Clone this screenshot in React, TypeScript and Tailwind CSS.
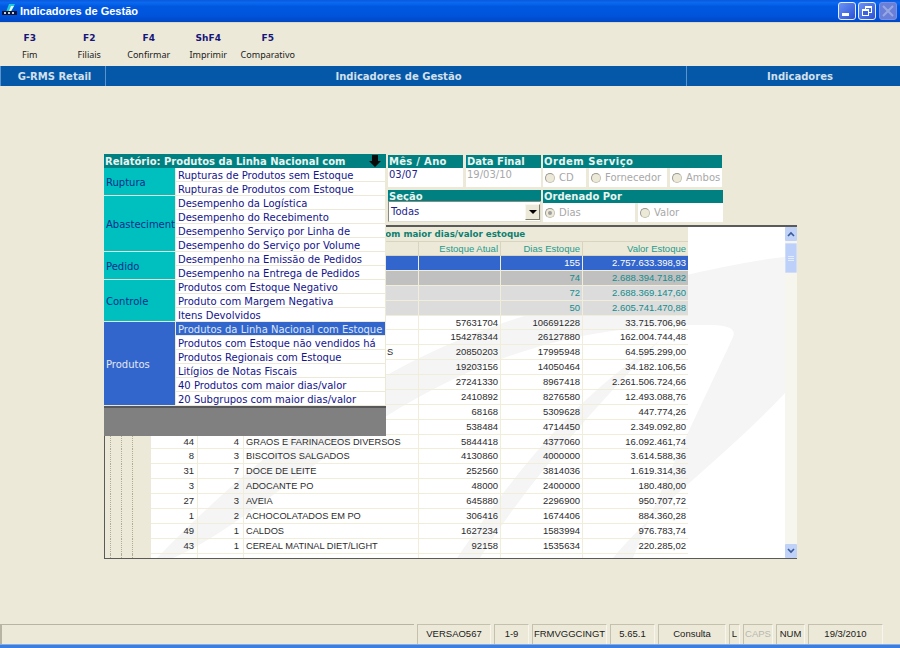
import React from "react";

const tools = [
  ["F3", "Fim"],
  ["F2", "Filiais"],
  ["F4", "Confirmar"],
  ["ShF4", "Imprimir"],
  ["F5", "Comparativo"],
];

const groups: { name: string; bg: string; text: string; items: string[] }[] = [
  { name: "Ruptura", bg: "bg-[#00bfbf]", text: "text-[#00308c]", items: ["Rupturas de Produtos sem Estoque", "Rupturas de Produtos com Estoque"] },
  { name: "Abastecimento", bg: "bg-[#00bfbf]", text: "text-[#00308c]", items: ["Desempenho da Logística", "Desempenho do Recebimento", "Desempenho Serviço por Linha de", "Desempenho do Serviço por Volume"] },
  { name: "Pedido", bg: "bg-[#00bfbf]", text: "text-[#00308c]", items: ["Desempenho na Emissão de Pedidos", "Desempenho na Entrega de Pedidos"] },
  { name: "Controle", bg: "bg-[#00bfbf]", text: "text-[#00308c]", items: ["Produtos com Estoque Negativo", "Produto com Margem Negativa", "Itens Devolvidos"] },
  { name: "Produtos", bg: "bg-[#3366cc]", text: "text-[#e4e8f4]", items: ["Produtos da Linha Nacional com Estoque", "Produtos com Estoque não vendidos há", "Produtos Regionais com Estoque", "Litígios de Notas Fiscais", "40 Produtos com maior dias/valor", "20 Subgrupos com maior dias/valor"] },
];

type Row = [string, string, string, string, string, string];
const rows: Row[] = [
  ["", "", "", "", "155", "2.757.633.398,93"],
  ["", "", "", "", "74", "2.688.394.718,82"],
  ["", "", "", "", "72", "2.688.369.147,60"],
  ["", "", "", "", "50", "2.605.741.470,88"],
  ["", "", "", "57631704", "106691228", "33.715.706,96"],
  ["", "", "", "154278344", "26127880", "162.004.744,48"],
  ["", "", "S", "20850203", "17995948", "64.595.299,00"],
  ["", "", "", "19203156", "14050464", "34.182.106,56"],
  ["", "", "", "27241330", "8967418", "2.261.506.724,66"],
  ["", "", "", "2410892", "8276580", "12.493.088,76"],
  ["", "", "", "68168", "5309628", "447.774,26"],
  ["", "", "", "538484", "4714450", "2.349.092,80"],
  ["44", "4", "GRAOS E FARINACEOS DIVERSOS", "5844418", "4377060", "16.092.461,74"],
  ["8", "3", "BISCOITOS SALGADOS", "4130860", "4000000", "3.614.588,36"],
  ["31", "7", "DOCE DE LEITE", "252560", "3814036", "1.619.314,36"],
  ["3", "2", "ADOCANTE PO", "48000", "2400000", "180.480,00"],
  ["27", "3", "AVEIA", "645880", "2296900", "950.707,72"],
  ["1", "2", "ACHOCOLATADOS EM PO", "306416", "1674406", "884.360,28"],
  ["49", "1", "CALDOS", "1627234", "1583994", "976.783,74"],
  ["43", "1", "CEREAL MATINAL DIET/LIGHT", "92158", "1535634", "220.285,02"],
  ["16", "1", "CONFEITOS ACUCARADOS", "354400", "1322812", "139.566,00"],
];

const rowStyle = (i: number) => {
  if (i === 0) return "bg-[#3366cc] text-white";
  if (i === 1) return "bg-[#c0c0c0] text-[#128c8c]";
  if (i === 2 || i === 3) return "bg-[#dcdcdc] text-[#128c8c]";
  return "text-[#2c2c2c]";
};

const status: [string, string][] = [
  ["VERSAO567", "w-[74px]"],
  ["1-9", "w-[35px]"],
  ["FRMVGGCINGT", "w-[75px]"],
  ["5.65.1", "w-[45px]"],
  ["Consulta", "w-[68px]"],
  ["L", "w-[11px]"],
  ["CAPS", "w-[30px] text-[#b8b8b0]"],
  ["NUM", "w-[29px]"],
  ["19/3/2010", "w-[75px]"],
];

function Radio({ label, checked, className }: { label: string; checked?: boolean; className: string }) {
  return (
    <div className={`bg-white h-full flex items-center pl-[2px] gap-[4px] text-[#a8a8a8] ${className}`}>
      <span className="w-[10px] h-[10px] rounded-full bg-[#ece9d8] border border-[#c4c2b0] border-l-[#9a9a90] border-t-[#9a9a90] flex items-center justify-center shrink-0">
        {checked && <span className="w-[4px] h-[4px] rounded-full bg-[#a0a0a0]" />}
      </span>
      {label}
    </div>
  );
}

function PanelHead({ children, className }: { children: React.ReactNode; className?: string }) {
  return <div className={`h-[13px] bg-[#008080] text-[#e8f4f0] font-bold text-[10px] leading-[13px] pl-[1px] whitespace-nowrap overflow-hidden ${className ?? ""}`}>{children}</div>;
}

function WinBtn({ children, className }: { children: React.ReactNode; className: string }) {
  return (
    <div className={`w-[18px] h-[18px] rounded-[3px] border flex items-center justify-center ${className}`}>
      {children}
    </div>
  );
}

export default function App() {
  return (
    <div className="w-[900px] h-[648px] bg-[#ece9d8] flex flex-col overflow-hidden relative font-['Liberation_Sans',sans-serif]">
      {/* title bar */}
      <div className="h-[23px] shrink-0 flex items-center pl-[2px] pr-[3px] bg-[linear-gradient(180deg,#0a58dc_0%,#0a6af0_12%,#0058e0_30%,#0054dc_70%,#0048c4_100%)] border-b border-[#dcd8c8]">
        <svg width="16" height="16" viewBox="0 0 16 16" className="shrink-0">
          <path d="M7 1 L13 1 L9 9 L4 9 Z" fill="#18c8d8" />
          <path d="M9 3 L12 3 L9 8 L7 8 Z" fill="#e8fcff" />
          <rect x="0" y="8" width="15" height="4" fill="#0a1430" />
          <rect x="2" y="9" width="2" height="2" fill="#d0d0d0" />
          <rect x="6" y="9" width="2" height="2" fill="#d0d0d0" />
          <rect x="10" y="9" width="2" height="2" fill="#d0d0d0" />
        </svg>
        <span className="ml-[2px] mt-[1px] text-white font-bold text-[11px] font-['Liberation_Sans',sans-serif] flex-1">Indicadores de Gestão</span>
        <div className="flex gap-[2px] items-center">
          <WinBtn className="border-[#e4ecfc] bg-[linear-gradient(135deg,#6a94f4,#2a50d8)]">
            <span className="w-[7px] h-[3px] bg-white mt-[7px] mr-[3px]" />
          </WinBtn>
          <WinBtn className="border-[#e4ecfc] bg-[linear-gradient(135deg,#6a94f4,#2a50d8)]">
            <svg width="12" height="12" viewBox="0 0 12 12" fill="none" stroke="white">
              <rect x="4.5" y="1.5" width="6" height="6" strokeWidth="1" />
              <path d="M4.5 2.5 H10.5" strokeWidth="1" />
              <rect x="1.5" y="4.5" width="6" height="6" fill="#3a62e0" strokeWidth="1" />
              <path d="M1.5 5.5 H7.5" strokeWidth="1" />
            </svg>
          </WinBtn>
          <WinBtn className="bg-[#6a80d8] border-[#7a90e4] ml-[1px]">
            <svg width="12" height="12" viewBox="0 0 12 12" stroke="#98a8e4" strokeWidth="2">
              <path d="M1 1 L11 11 M11 1 L1 11" />
            </svg>
          </WinBtn>
        </div>
      </div>

      {/* toolbar */}
      <div className="h-[43px] shrink-0 flex pt-[9px]">
        {tools.map(([k, l]) => (
          <div key={k} className="w-[59.5px] flex flex-col items-center">
            <span className="font-['DejaVu_Sans',sans-serif] font-bold text-[9px] leading-[13px] text-[#16167a]">{k}</span>
            <span className="mt-[4px] text-[9px] leading-[12px] text-[#202020] whitespace-nowrap font-['Noto_Sans',sans-serif]">{l}</span>
          </div>
        ))}
      </div>

      {/* module bar */}
      <div className="h-[20px] shrink-0 bg-[#0558a8] flex text-[#d4e0ec] font-['DejaVu_Sans',sans-serif] font-bold text-[10px] leading-[22px] text-center">
        <div className="w-[106px] border-x border-[#5a94cc] pl-[3px]">G-RMS Retail</div>
        <div className="w-[581px] border-r border-[#5a94cc] pl-[5px]">Indicadores de Gestão</div>
        <div className="flex-1 pl-[13px]">Indicadores</div>
      </div>

      {/* content */}
      <div className="flex-1 min-h-0 relative font-['DejaVu_Sans',sans-serif] text-[10px]">
        {/* filter form */}
        <div className="ml-[388px] mt-[69px] w-[335px] flex flex-col gap-[3px]">
          <div className="flex gap-[3px] h-[32px]">
            <div className="w-[75px] flex flex-col">
              <PanelHead className="tracking-[0.3px]">Mês / Ano</PanelHead>
              <div className="flex-1 bg-white text-[#1e1e8c] pl-[1px] leading-[14px]">03/07</div>
            </div>
            <div className="w-[75px] flex flex-col">
              <PanelHead>Data Final</PanelHead>
              <div className="flex-1 bg-white text-[#a8a8a8] pl-[1px] leading-[14px]">19/03/10</div>
            </div>
            <div className="w-[179px] ml-[-1px] flex flex-col">
              <PanelHead className="tracking-[0.5px]">Ordem Serviço</PanelHead>
              <div className="flex-1 flex gap-[3px] min-h-0">
                <Radio label="CD" className="w-[43px]" />
                <Radio label="Fornecedor" className="w-[78px]" />
                <Radio label="Ambos" className="flex-1" />
              </div>
            </div>
          </div>
          <div className="flex gap-[2px] h-[32px]">
            <div className="w-[153px] flex flex-col">
              <PanelHead>Seção</PanelHead>
              <div className="flex-1 bg-white border border-[#8a8a80] border-r-[#e0ded0] border-b-[#e0ded0] flex items-center justify-between text-[#1e1e8c] pl-[2px] leading-[18px]">
                <span className="mt-[1px]">Todas</span>
                <span className="w-[15px] h-[16px] bg-[#ece9d8] border border-[#f8f8f0] border-r-[#808070] border-b-[#808070] flex items-center justify-center">
                  <span className="w-0 h-0 border-x-[4px] border-x-transparent border-t-[4px] border-t-black" />
                </span>
              </div>
            </div>
            <div className="w-[180px] flex flex-col">
              <PanelHead>Ordenado Por</PanelHead>
              <div className="flex-1 flex gap-[3px] min-h-0">
                <Radio label="Dias" checked className="w-[92px]" />
                <Radio label="Valor" className="flex-1" />
              </div>
            </div>
          </div>
        </div>

        {/* data grid */}
        <div className="ml-[104px] mt-[3px] w-[693px] h-[334px] bg-white border-t-2 border-b border-l border-t-[#5a5a5a] border-b-[#5a5a5a] border-l-[#5a5a5a] flex relative overflow-hidden">
          <svg className="absolute left-0 top-0" width="692" height="332" viewBox="0 0 692 332">
            <path d="M52 331 C150 230 280 120 470 75 C550 55 630 35 680 30 L680 166 C620 230 550 280 508 331 L528 331 C560 250 610 150 628 110 C632 100 620 98 600 98 C500 98 400 115 280 190 C200 240 120 310 68 331 Z" fill="#f5f5f5" />
            <path d="M352 331 C400 260 460 180 540 125 L556 112 C480 190 420 260 375 331 Z" fill="#f5f5f5" />
          </svg>
          <div className="w-[583px] shrink-0 relative flex flex-col font-['Liberation_Sans',sans-serif] text-[9.5px]">
            <div className="h-[14px] shrink-0 bg-[#ece9d8] text-center text-[#0e8070] font-bold font-['DejaVu_Sans',sans-serif] text-[8.7px] leading-[14px] pl-[50px]">
              40 Produtos com maior dias/valor estoque
            </div>
            <div className="h-[15px] shrink-0 flex bg-[#ece9d8] border-t border-b border-[#d8d4c0] text-[#1e9a8c] leading-[13px] text-right">
              <div className="w-[46px] border-r border-[#d8d4c0]" />
              <div className="w-[47px] border-r border-[#d8d4c0]" />
              <div className="w-[46px] border-r border-[#d8d4c0]" />
              <div className="w-[175px] border-r border-[#d8d4c0]" />
              <div className="w-[82px] border-r border-[#d8d4c0] pr-[2px]">Estoque Atual</div>
              <div className="w-[82px] border-r border-[#d8d4c0] pr-[2px]">Dias Estoque</div>
              <div className="w-[105px] pr-[2px]">Valor Estoque</div>
            </div>
            {rows.map((r, i) => (
              <div key={i} className={`h-[14.875px] shrink-0 flex leading-[14px] whitespace-nowrap ${rowStyle(i)}`}>
                <div className="w-[46px] h-full flex bg-[#ece9d8] shrink-0">
                  <div className="w-[6px] border-r border-dotted border-[#b0ac98]" />
                  <div className="w-[11px] border-r border-dotted border-[#b0ac98]" />
                  <div className="w-[11px] border-r border-dotted border-[#b0ac98]" />
                </div>
                <div className="w-[47px] h-full border-r border-b border-[#f0edd8] text-right pr-[3px]">{r[0]}</div>
                <div className="w-[46px] h-full border-r border-b border-[#f0edd8] text-right pr-[4px]">{r[1]}</div>
                <div className={`w-[175px] h-full border-r border-b border-[#f0edd8] overflow-hidden text-[9.25px] ${r[2] === "S" ? "pl-[143px]" : "pl-[2px]"}`}>{r[2]}</div>
                <div className="w-[82px] h-full border-r border-b border-[#f0edd8] text-right pr-[2px]">{r[3]}</div>
                <div className="w-[82px] h-full border-r border-b border-[#f0edd8] text-right pr-[2px]">{r[4]}</div>
                <div className="w-[105px] h-full border-b border-[#f0edd8] text-right pr-[2px]">{r[5]}</div>
              </div>
            ))}
          </div>
          <div className="flex-1" />
          {/* scrollbar */}
          <div className="w-[12px] shrink-0 relative bg-[#f6f5ee] flex flex-col items-stretch justify-between">
            <div>
              <div className="h-[14px] bg-[#c0d2f8] rounded-[1px] flex items-center justify-center">
                <svg width="8" height="6" viewBox="0 0 8 6" fill="none" stroke="#3a5a98" strokeWidth="1.6"><path d="M1 5 L4 2 L7 5" /></svg>
              </div>
              <div className="mt-[2px] h-[30px] bg-[#bdd0fa] rounded-[1px] border border-[#d0defc] flex flex-col items-center justify-center gap-[1px]">
                <span className="w-[6px] h-[1px] bg-[#e4ecfe]" />
                <span className="w-[6px] h-[1px] bg-[#e4ecfe]" />
                <span className="w-[6px] h-[1px] bg-[#e4ecfe]" />
              </div>
            </div>
            <div className="h-[14px] bg-[#c0d2f8] rounded-[1px] flex items-center justify-center">
              <svg width="8" height="6" viewBox="0 0 8 6" fill="none" stroke="#3a5a98" strokeWidth="1.6"><path d="M1 1 L4 4 L7 1" /></svg>
            </div>
          </div>
        </div>

        {/* open report dropdown */}
        <div className="absolute left-[104px] top-[68px] w-[282px] h-[282px] bg-[#ece9d8] flex flex-col overflow-hidden">
          <div className="h-[14px] shrink-0 bg-[#008080] text-[#e8f4f0] font-bold text-[10px] leading-[15px] pl-[1px] flex justify-between items-center pr-[5px]">
            <span className="whitespace-nowrap">Relatório: Produtos da Linha Nacional com</span>
            <svg width="12" height="12" viewBox="0 0 12 12"><path d="M3 0 H9 V6 H12 L6 12 L0 6 H3 Z" fill="#0a0a0a" /></svg>
          </div>
          {groups.map((g) => (
            <div key={g.name} className="flex shrink-0">
              <div className={`w-[71px] shrink-0 flex items-center overflow-hidden whitespace-nowrap pl-[2px] pt-[2px] border-b border-[#e8e6d8] ${g.bg} ${g.text}`}>{g.name}</div>
              <div className="flex-1 pl-[1px] pr-[1px] min-w-0">
                {g.items.map((it) => {
                  const sel = it === "Produtos da Linha Nacional com Estoque";
                  return (
                    <div key={it} className={`h-[14px] border-b border-[#ece9d8] pl-[2px] leading-[15px] whitespace-nowrap overflow-hidden ${sel ? "bg-[#3366cc] text-[#dfe6f6]" : "bg-white text-[#14148c]"}`}>
                      {it}
                    </div>
                  );
                })}
              </div>
            </div>
          ))}
          <div className="flex-1 bg-[#808080] border-t-2 border-[#585858]" />
        </div>
      </div>

      {/* status bar */}
      <div className="h-[20px] shrink-0 flex gap-[3px] text-[9.5px] leading-[18px] text-center text-[#202020] font-['Liberation_Sans',sans-serif]">
        <div className="w-[414px] border-l-2 border-t border-[#b8b4a4]" />
        {status.map(([t, c]) => (
          <div key={t} className={`border-l border-t border-[#c4c0ae] border-r-[#f8f6ec] border-r ${c}`}>{t}</div>
        ))}
      </div>
      <div className="h-[4px] shrink-0 bg-[#3a7ee0] border-t border-[#88acea]" />
    </div>
  );
}
